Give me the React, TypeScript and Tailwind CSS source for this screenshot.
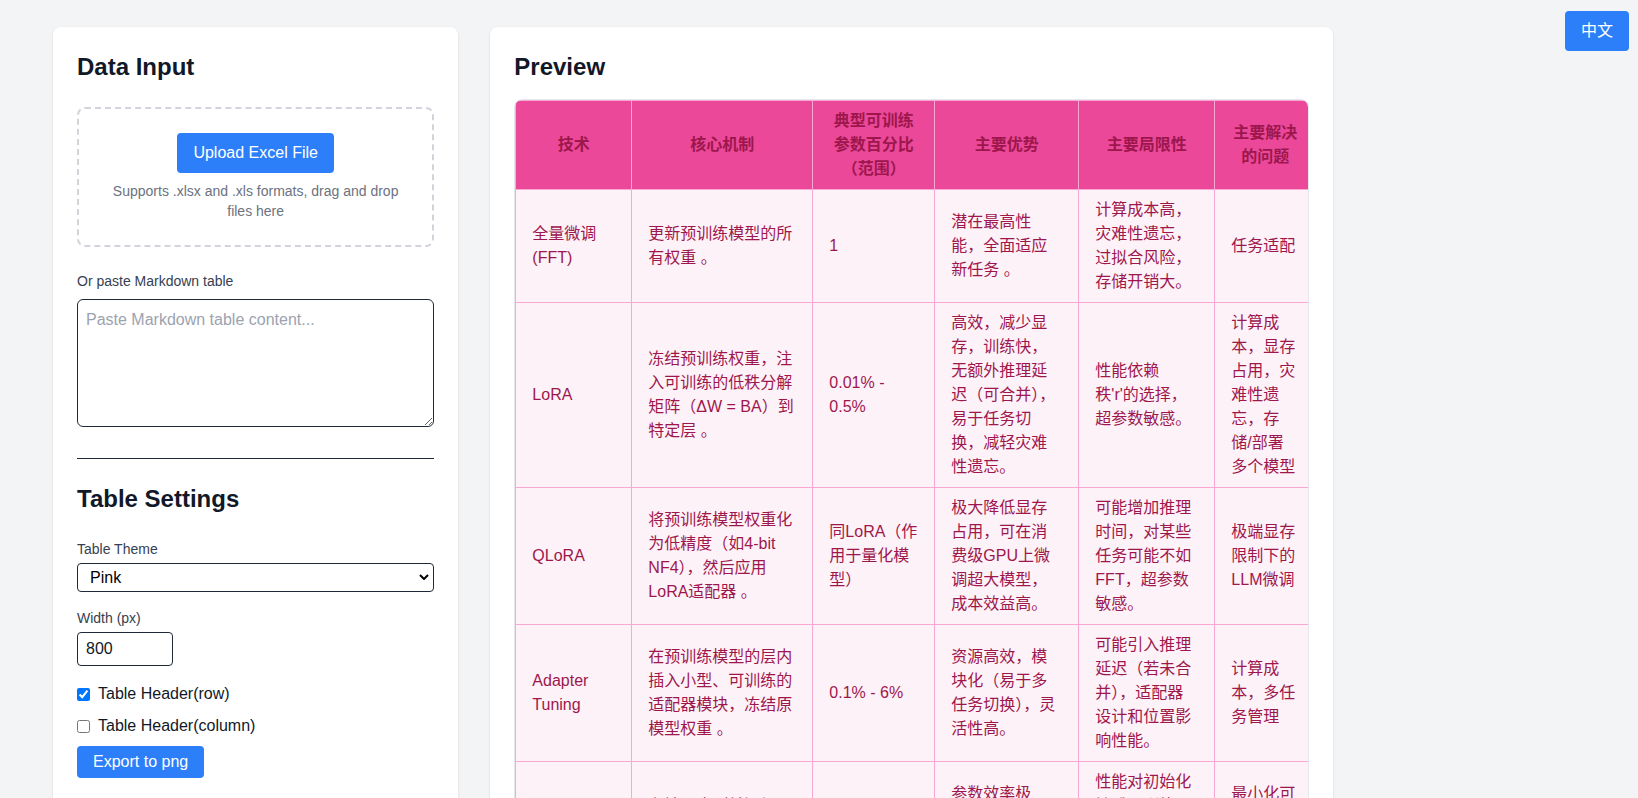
import React from 'react';

const headers = ['技术', '核心机制', '典型可训练参数百分比（范围）', '主要优势', '主要局限性', '主要解决的问题'];

const colWidths = ['w-[116px]', 'w-[181px]', 'w-[122px]', 'w-[144px]', 'w-[136px]', 'w-[101px]'];

const rows: string[][] = [
  [
    '全量微调(FFT)',
    '更新预训练模型的所有权重 。',
    '1',
    '潜在最高性能，全面适应新任务 。',
    '计算成本高，灾难性遗忘，过拟合风险，存储开销大。',
    '任务适配',
  ],
  [
    'LoRA',
    '冻结预训练权重，注入可训练的低秩分解矩阵（ΔW = BA）到特定层 。',
    '0.01% - 0.5%',
    '高效，减少显存，训练快，无额外推理延迟（可合并），易于任务切换，减轻灾难性遗忘。',
    "性能依赖秩'r'的选择，超参数敏感。",
    '计算成本，显存占用，灾难性遗忘，存储/部署多个模型',
  ],
  [
    'QLoRA',
    '将预训练模型权重化为低精度（如4-bit NF4），然后应用LoRA适配器 。',
    '同LoRA（作用于量化模型）',
    '极大降低显存占用，可在消费级GPU上微调超大模型，成本效益高。',
    '可能增加推理时间，对某些任务可能不如FFT，超参数敏感。',
    '极端显存限制下的LLM微调',
  ],
  [
    'Adapter Tuning',
    '在预训练模型的层内插入小型、可训练的适配器模块，冻结原模型权重 。',
    '0.1% - 6%',
    '资源高效，模块化（易于多任务切换），灵活性高。',
    '可能引入推理延迟（若未合并），适配器设计和位置影响性能。',
    '计算成本，多任务管理',
  ],
  [
    'Prefix Tuning',
    '在输入序列前添加可训练的连续前缀向量，冻结模型参数。',
    '0.1%',
    '参数效率极高，存储开销小，支持多任务切换。',
    '性能对初始化敏感，训练可能不稳定，占用部分输入长度。',
    '最小化可训练参数，多任务部署',
  ],
  [
    'Prompt Tuning',
    '仅在输入嵌入层添加可训练的软提示向量。',
    '< 0.01%',
    '极少参数，实现简单，易于部署。',
    '小模型上效果较差，收敛较慢。',
    '大模型的轻量适配',
  ],
];

const Label = ({ children }: { children: React.ReactNode }) => (
  <label className="block text-sm text-[#374151] mb-1">{children}</label>
);

export default function App() {
  return (
    <div className="relative min-h-screen bg-[#f3f4f6] font-['Liberation_Sans','Noto_Sans_CJK_SC',sans-serif] text-[#111827]">
      <button className="absolute top-[11px] right-[9px] bg-[#2d7ff9] text-white px-4 py-2 rounded leading-6">
        中文
      </button>

      <div className="pl-[53px] pt-[27px] w-[1333px]">
        <div className="grid grid-cols-3 gap-8">
          {/* left: input + settings */}
          <div className="col-span-1 bg-white rounded-lg shadow-sm p-6">
            <h2 className="text-2xl font-bold leading-8 mb-6">Data Input</h2>

            <div className="border-2 border-dashed border-[#d1d5db] rounded-lg p-6 flex flex-col items-center text-center">
              <button className="bg-[#2d7ff9] text-white px-4 py-2 rounded leading-6">Upload Excel File</button>
              <p className="mt-2 text-sm leading-5 text-[#6b7280]">
                Supports .xlsx and .xls formats, drag and drop files here
              </p>
            </div>

            <div className="mt-6">
              <label className="block text-sm leading-5 text-[#374151] mb-2">Or paste Markdown table</label>
              <textarea
                className="block w-full h-32 border border-[#1f2937] rounded-md p-2 leading-6 placeholder:text-[#9ca3af]"
                placeholder="Paste Markdown table content..."
              />
            </div>

            <hr className="mt-[31px] border-[#1f2937]" />

            <h2 className="text-2xl font-bold leading-8 mt-6 mb-6">Table Settings</h2>

            <Label>Table Theme</Label>
            <div className="relative">
              <select
                defaultValue="pink"
                className="block w-full h-[29px] border border-[#1f2937] rounded pl-3 pr-8 appearance-none bg-white text-black leading-6"
              >
                <option value="pink">Pink</option>
                <option value="blue">Blue</option>
                <option value="green">Green</option>
                <option value="gray">Gray</option>
              </select>
              <svg
                viewBox="0 0 10 6"
                className="absolute right-[5px] top-[11px] w-[10px] h-[6px] pointer-events-none"
                fill="none"
                stroke="black"
                strokeWidth={2}
              >
                <path d="M1 1l4 4 4-4" />
              </svg>
            </div>

            <div className="mt-4">
              <Label>Width (px)</Label>
              <input
                type="number"
                defaultValue={800}
                className="block w-24 h-[34px] border border-[#1f2937] rounded px-2 leading-6"
              />
            </div>

            <div className="mt-4 flex flex-col gap-2">
              <label className="flex items-center gap-2 leading-6">
                <input type="checkbox" defaultChecked className="w-[13px] h-[13px]" />
                Table Header(row)
              </label>
              <label className="flex items-center gap-2 leading-6">
                <input type="checkbox" className="w-[13px] h-[13px]" />
                Table Header(column)
              </label>
            </div>

            <button className="mt-2 bg-[#2d7ff9] text-white px-4 py-1 rounded leading-6">Export to png</button>
          </div>

          {/* right: preview */}
          <div className="col-span-2 bg-white rounded-lg shadow-sm p-6 min-w-0">
            <h2 className="text-2xl font-bold leading-8 mb-4">Preview</h2>
            <div className="overflow-x-auto border border-[#e5e7eb] rounded-lg">
              <table className="table-fixed border-collapse w-[800px] text-[#9d174d] leading-6">
                <thead>
                  <tr className="bg-[#ec4899]">
                    {headers.map((h, i) => (
                      <th key={i} className={`${colWidths[i]} border border-[#f9a8d4] px-4 py-2 font-bold text-center align-middle`}>
                        {h}
                      </th>
                    ))}
                  </tr>
                </thead>
                <tbody>
                  {rows.map((row, r) => (
                    <tr key={r} className="bg-[#fdf2f8]">
                      {row.map((cell, c) => (
                        <td key={c} className="border border-[#f9a8d4] px-4 py-2 text-left align-middle">
                          {cell}
                        </td>
                      ))}
                    </tr>
                  ))}
                </tbody>
              </table>
            </div>
          </div>
        </div>
      </div>
    </div>
  );
}
